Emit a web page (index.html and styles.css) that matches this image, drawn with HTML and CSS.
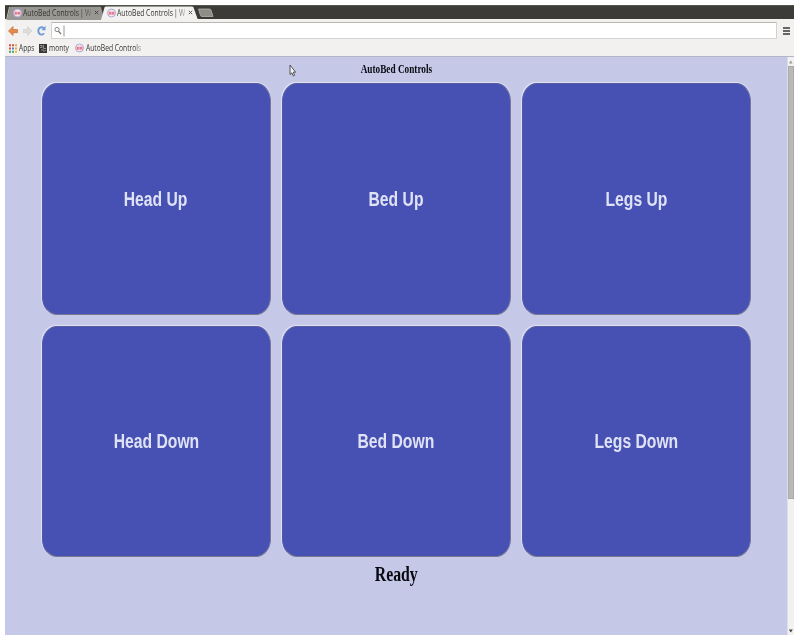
FILE: index.html
```html
<!DOCTYPE html>
<html lang="en">
<head>
<meta charset="utf-8">
<title>AutoBed Controls</title>
<link rel="stylesheet" href="styles.css">
</head>
<body>
<svg width="0" height="0" class="defs"><defs>
<g id="fav"><circle cx="4.5" cy="5" r="4" fill="#f4e4ea" stroke="#a6a0d8" stroke-width=".9"/><path d="M2.300 6.600V3.800M3.800 6.600V3.800M5.300 6.600V3.800M6.800 6.600V3.800" stroke="#e4485e" stroke-width=".9" fill="none"/></g>
</defs></svg>
<div class="window">
  <div class="tabstrip">
    <svg class="tabshapes" width="215" height="14" viewBox="0 0 215 14">
      <path d="M2 14 5 1.500Q5.300 .8 6 .8H95Q96 .8 96.300 2L99 14Z" fill="#999792"/>
      <path d="M1.500 14 4.500 1" stroke="#c5c3be" fill="none"/>
      <path d="M96 14 99.500 1.500Q100 .5 101 .5H187Q188 .5 188.500 1.500L193 14Z" fill="#f2f1f0"/>
      <path d="M193.500 3H204.500Q205.500 3 206 4L208 10.500H197Q196 10.500 195.500 9.500Z" fill="#8f8d88" stroke="#b4b2ac" stroke-width=".8"/>
    </svg>
    <div class="tab first"><svg width="9" height="10"><use href="#fav"/></svg><span class="label"><span>AutoBed Controls&thinsp;|&thinsp;W</span></span><svg class="close" width="5" height="5"><path d="M.8.8l3.400 3.400M4.200.8.8 4.200" stroke="#444"/></svg></div>
    <div class="tab"><svg width="9" height="10"><use href="#fav"/></svg><span class="label"><span>AutoBed Controls&thinsp;|&thinsp;W</span></span><svg class="close" width="5" height="5"><path d="M.8.8l3.400 3.400M4.200.8.8 4.200" stroke="#555"/></svg></div>
  </div>
  <div class="toolbar">
    <svg width="44" height="16" viewBox="0 0 44 16">
      <path d="M3.500 8 8 3.500V6.500H12.500V9.700H8V12.500Z" fill="#e58a4c" stroke="#c96f35" stroke-width=".7"/>
      <path d="M27 8 22.500 3.500V6.500H18.500V9.700H22.500V12.500Z" fill="#dedddb" stroke="#cfcdca" stroke-width=".6"/>
      <path d="M38.700 5.200A3.200 3.700 0 1 0 39 10.200" fill="none" stroke="#6d9bd8" stroke-width="1.900"/><path d="M36.500 7.200H40.500V2.800Z" fill="#6d9bd8"/>
    </svg>
    <div class="omnibox"><svg width="14" height="14" viewBox="0 0 14 14"><circle cx="5" cy="5.500" r="2.100" fill="#fff" stroke="#777" stroke-width=".9"/><path d="M6.500 7.300 9 10" stroke="#777" stroke-width="1.300"/><path d="M12 1.500V12.500" stroke="#888" stroke-width=".9"/></svg></div>
    <div class="menu"><i></i><i></i><i></i></div>
  </div>
  <div class="bookmarks">
    <svg width="8" height="9" viewBox="0 0 8 9"><path d="M0 1.300h2M0 4.500h2" stroke="#dc5146" stroke-width="2"/><path d="M3 1.300h2" stroke="#d95045" stroke-width="2"/><path d="M6 1.300h2M6 4.500h2" stroke="#e7ae3b" stroke-width="2"/><path d="M3 4.500h2" stroke="#4a84d8" stroke-width="2"/><path d="M0 7.700h2M3 7.700h2" stroke="#49a163" stroke-width="2"/><path d="M6 7.700h2" stroke="#e9b93e" stroke-width="2"/></svg>
    <span class="bm apps"><span>Apps</span></span>
    <svg width="8" height="9" viewBox="0 0 8 9"><path d="M0 0h8v9H0Z" fill="#393735"/><path d="M1 1.500h2v2H1M4.500 1v3.500H7M2 6h3v2M6 6.500h1" stroke="#aaa6a0" fill="none" stroke-width=".8"/></svg>
    <span class="bm monty"><span>monty</span></span>
    <svg width="9" height="10"><use href="#fav"/></svg>
    <span class="bm auto"><span>AutoBed Controls</span></span>
  </div>
  <div class="content">
    <main class="page">
      <h1><span>AutoBed Controls</span></h1>
      <div class="grid">
        <button><span>Head Up</span></button>
        <button><span>Bed Up</span></button>
        <button><span>Legs Up</span></button>
        <button><span>Head Down</span></button>
        <button><span>Bed Down</span></button>
        <button><span>Legs Down</span></button>
      </div>
      <p class="status"><span>Ready</span></p>
    </main>
    <div class="scrollbar">
      <svg width="7" height="9"><path d="M2 6.500 3.800 3.500 5.600 6.500Z" fill="#999"/></svg>
      <div class="thumb"></div>
      <svg class="down" width="7" height="9"><path d="M1.800 3.500 3.800 6.500 5.800 3.500Z" fill="#444"/></svg>
    </div>
  </div>
  <svg class="cursor" width="8" height="14" viewBox="0 0 8 14"><path d="M1 1V10.500L2.900 8.800 4.300 12 5.600 11.300 4.400 8.200H6.600Z" fill="#f2f2f2" stroke="#444" stroke-width=".9"/></svg>
</div>
</body>
</html>
```
FILE: styles.css
```css
* { box-sizing: border-box; }
body { margin: 0; padding: 5px; background: #fff; }
svg { display: block; flex: none; }
.defs { position: absolute; }
.window { position: relative; width: 789px; height: 630px; background: #f2f1ef; }
.tabstrip { position: relative; height: 14px; background: #3c3b37; border-top: 1px solid #55534e; display: flex; padding-left: 8px; }
.tabshapes { position: absolute; left: 0; top: 0; }
.tab { position: relative; display: flex; align-items: center; width: 94px; height: 13px; }
.tab.first { width: 94px; }
.label { display: block; width: 68px; height: 13px; margin-left: 1px; }
.label span, .bm span { display: block; width: max-content; white-space: nowrap; transform-origin: left center; font-family: "Open Sans", "Noto Sans", sans-serif; font-weight: 500; color: #333; }
.label span { font-size: 8.5px; line-height: 13px; transform: scaleX(.8); -webkit-mask-image: linear-gradient(90deg, #000 85%, rgba(0,0,0,.3)); }
.close { margin-left: 3px; }
.toolbar { height: 22px; display: flex; align-items: center; padding-top: 1px; }
.omnibox { width: 726px; height: 17px; margin-left: 2px; background: #fff; border: 1px solid #d4d2cf; border-top-color: #b8b6b3; display: flex; align-items: center; border-radius: 1px; }
.menu { width: 7px; margin-left: 6px; display: grid; gap: 1px; }
.menu i { height: 2px; background: #666; }
.bookmarks { height: 16px; display: flex; align-items: center; padding: 0 0 1px 4px; border-bottom: 1px solid #b5b5c9; }
.bm { height: 14px; margin-left: 2px; }
.bm span { font-size: 8.5px; line-height: 14px; }
.apps { width: 20px; }
.apps span { transform: scaleX(.77); }
.monty { width: 25px; margin-right: 1px; }
.monty span { transform: scaleX(.78); }
.auto { width: 60px; }
.auto span { transform: scaleX(.79); -webkit-mask-image: linear-gradient(90deg, #000 88%, rgba(0,0,0,.35)); }
.content { display: flex; height: 578px; }
.page { width: 782px; background: #c5c8e7; }
h1 { margin: 0; padding-top: 4px; height: 26px; font: bold 12px/17px "Liberation Serif", serif; text-align: center; color: #090a12; }
h1 span { display: inline-block; transform: scaleX(.77); }
.grid { display: grid; grid-template-columns: repeat(3, 229px); grid-template-rows: repeat(2, 231.500px); gap: 11px; margin-left: 36.500px; }
button { padding: 0; border: 1px solid #7776a0; border-top-color: #5a5c9e; border-left-color: #5459a8; border-bottom-color: #77788f; border-radius: 15px / 18px; background: #4751b3; color: #dfe2f5; font: bold 20px/24px "Liberation Sans", sans-serif; box-shadow: -.5px -1px 1px #dfe2f3; }
button span { display: inline-block; transform: scaleX(.785); }
.status { margin: 0; padding-top: 5px; font: bold 20px/24px "Liberation Serif", serif; text-align: center; color: #080810; }
.status span { display: inline-block; transform: scaleX(.79); }
.scrollbar { width: 7px; background: #f1f1f1; border-left: 1px solid #dedee5; display: flex; flex-direction: column; }
.thumb { height: 433px; background: #b9b9b9; border: 1px solid #aaa; }
.scrollbar svg { margin-left: -1px; }
.down { margin-top: auto; }
.cursor { position: absolute; left: 284px; top: 59px; }
```
